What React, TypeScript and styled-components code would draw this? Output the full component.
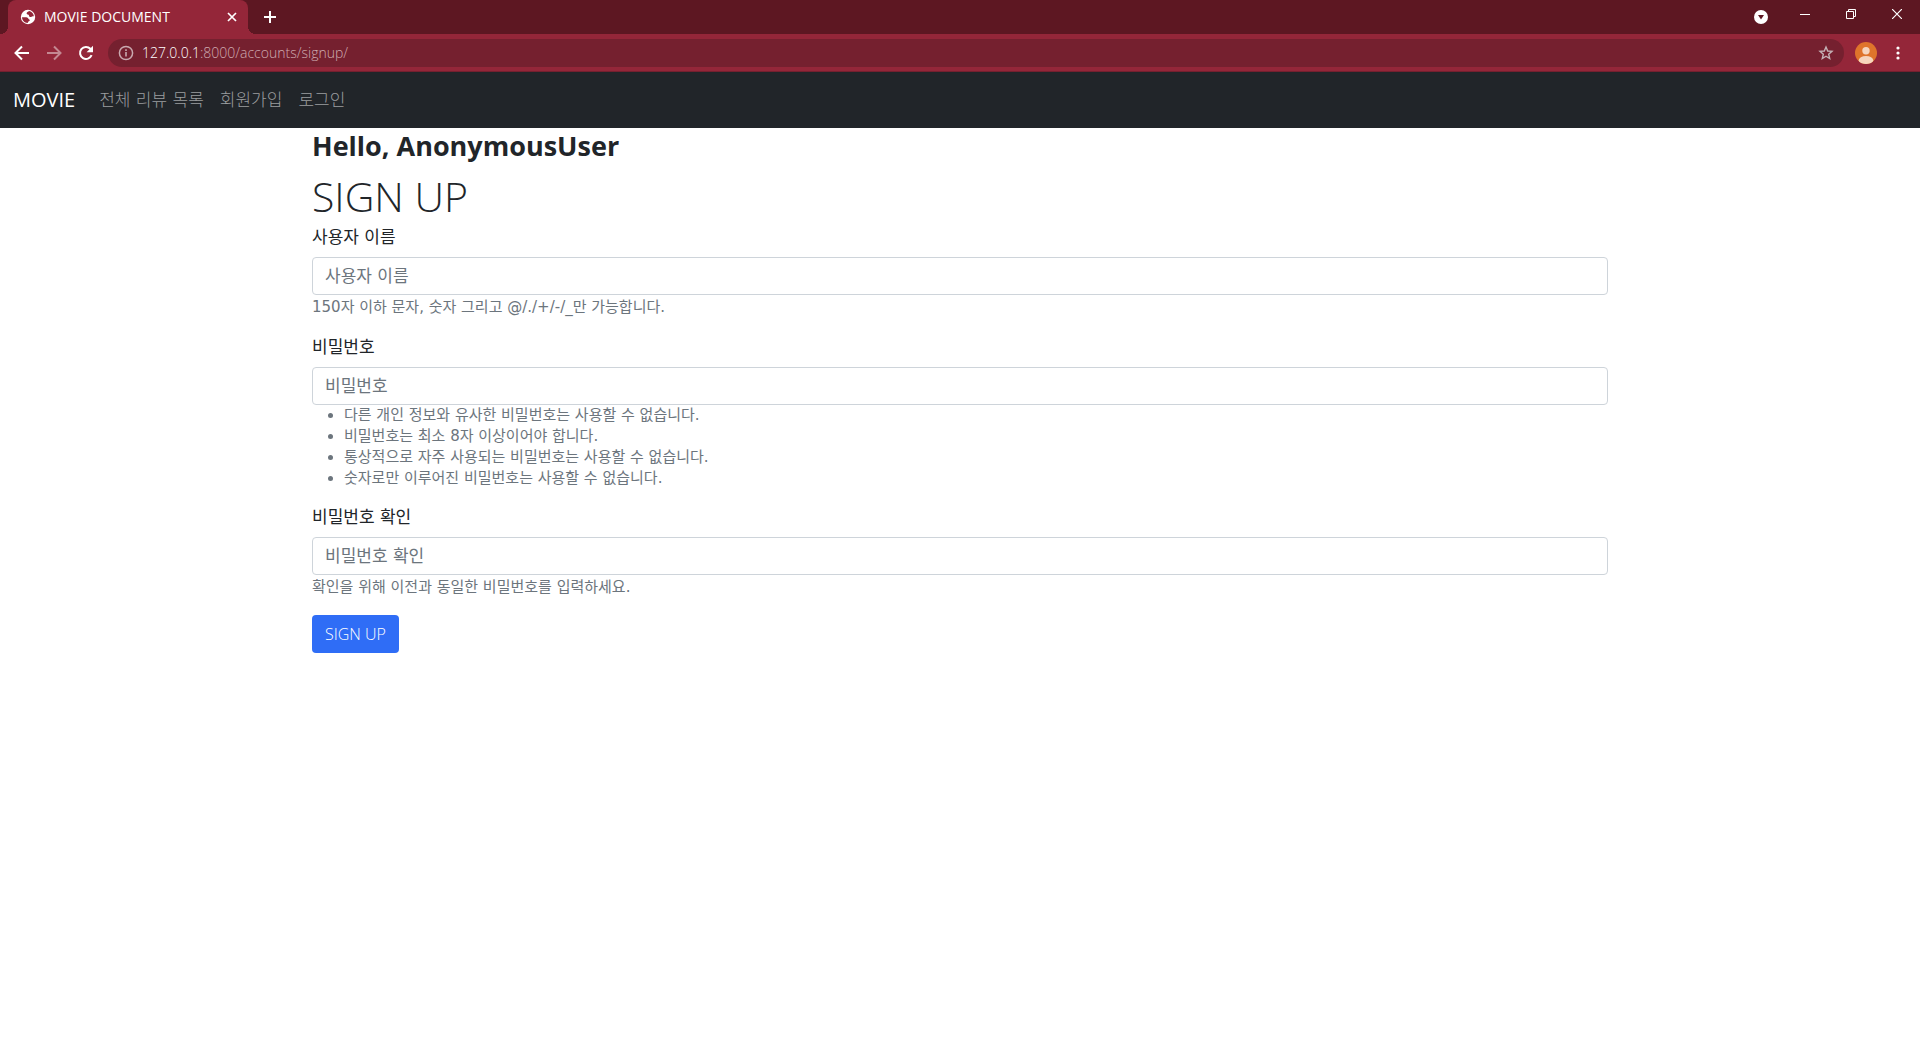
import React from "react";
import styled, { createGlobalStyle } from "styled-components";

const GlobalStyle = createGlobalStyle`
  *, *::before, *::after { box-sizing: border-box; }
  body {
    margin: 0;
    background: #fff;
    color: #212529;
    font-family: "Open Sans", "Noto Sans CJK KR", sans-serif;
    font-size: 17px;
    font-weight: 400;
    line-height: 24px;
  }
  button, input { font: inherit; }
  h1, h2, p, ul { margin: 0; }
`;

const koreanFont = `"DejaVu Sans", "Noto Sans CJK KR", sans-serif`;

const TabStrip = styled.header`
  display: flex;
  align-items: flex-start;
  height: 34px;
  padding-left: 8px;
  background: #5d1722;
`;

const Tab = styled.div`
  position: relative;
  display: flex;
  align-items: center;
  gap: 8px;
  width: 240px;
  height: 34px;
  padding: 0 10px 0 12px;
  border-radius: 8px 8px 0 0;
  background: #942639;
  color: #fff;
  font-size: 14px;
  line-height: 16px;

  &::before, &::after {
    content: "";
    position: absolute;
    bottom: 0;
    width: 8px;
    height: 8px;
  }
  &::before {
    left: -8px;
    background: radial-gradient(circle at 0 0, #5d1722 8px, #942639 8px);
  }
  &::after {
    right: -8px;
    background: radial-gradient(circle at 100% 0, #5d1722 8px, #942639 8px);
  }
`;

const TabTitle = styled.span`
  flex: 1;
`;

const IconButton = styled.button<{ $w?: number; $h?: number; $dim?: boolean }>`
  display: flex;
  align-items: center;
  justify-content: center;
  width: ${(p) => p.$w ?? 32}px;
  height: ${(p) => p.$h ?? 32}px;
  padding: 0;
  border: 0;
  background: none;
  color: #fff;
  opacity: ${(p) => (p.$dim ? 0.45 : 1)};
`;

const NewTab = styled(IconButton)`
  margin-left: 6px;
`;

const WindowControls = styled.div`
  display: flex;
  margin-left: auto;
`;

const Toolbar = styled.div`
  display: flex;
  align-items: center;
  height: 38px;
  padding: 0 6px;
  border-bottom: 1px solid #75202f;
  background: #942639;
`;

const AddressBar = styled.div`
  display: flex;
  flex: 1;
  align-items: center;
  gap: 8px;
  height: 28px;
  margin: 0 6px;
  padding: 0 8px 0 10px;
  border-radius: 14px;
  background: #75202f;
  color: #c9a9af;
`;

const Address = styled.div`
  flex: 1;
  color: #cfabb1;
  font-size: 14px;
  font-weight: 300;
  line-height: 20px;
`;

const Host = styled.span`
  color: #fff;
`;

const Navbar = styled.nav`
  display: flex;
  align-items: center;
  gap: 16px;
  padding: 12px 12px 12px 13px;
  background: #212529;
`;

const Brand = styled.a`
  color: #fff;
  font-size: 20px;
  line-height: 32px;
  text-decoration: none;
`;

const NavLinks = styled.div`
  display: flex;
`;

const NavLink = styled.a`
  padding: 0 8px;
  color: #9b9d9f;
  font-family: ${koreanFont};
  font-weight: 300;
  line-height: 32px;
  text-decoration: none;
`;

const Container = styled.main`
  max-width: 1320px;
  margin: 0 auto;
  padding: 0 12px;
`;

const Greeting = styled.h2`
  margin-bottom: 8px;
  font-size: 27px;
  font-weight: 700;
  line-height: 35px;
`;

const Title = styled.h1`
  margin-bottom: 4px;
  font-size: 41px;
  font-weight: 300;
  line-height: 50px;
`;

const Field = styled.div`
  margin-bottom: 16px;
  font-family: ${koreanFont};
`;

const Label = styled.label`
  display: block;
  margin-bottom: 8px;
`;

const Input = styled.input`
  display: block;
  width: 100%;
  height: 38px;
  padding: 6px 12px;
  border: 1px solid #ced4da;
  border-radius: 4px;
  background: #fff;
  color: #212529;

  &::placeholder {
    color: #6c757d;
    opacity: 1;
  }
`;

const HelpText = styled.p`
  color: #6c757d;
  font-size: 15px;
  line-height: 24px;
`;

const HelpList = styled.ul`
  padding-left: 32px;
  color: #6c757d;
  font-size: 15px;
  line-height: 21px;
`;

const Submit = styled.button`
  height: 38px;
  padding: 0 13px;
  border: 0;
  border-radius: 4px;
  background: #2f6df6;
  color: #fff;
  font-size: 16px;
  font-weight: 300;
`;

const passwordRules = [
  "다른 개인 정보와 유사한 비밀번호는 사용할 수 없습니다.",
  "비밀번호는 최소 8자 이상이어야 합니다.",
  "통상적으로 자주 사용되는 비밀번호는 사용할 수 없습니다.",
  "숫자로만 이루어진 비밀번호는 사용할 수 없습니다.",
];

const GlobeIcon = () => (
  <svg width="16" height="16" viewBox="0 0 16 16" aria-hidden="true">
    <circle cx="8" cy="8" r="7.2" fill="#fff" />
    <path
      d="M9.200 2.100C8.300 3 6.400 3.200 6.600 4.600c.2 1.200 2.200.7 2.400 1.800.2 1 .6 1.700 2 1.600 1.100 0 1.300-.9 2.900-.7C13.700 5 12 2.600 9.200 2.100z"
      fill="#942639"
    />
    <path
      d="M2 8.300c2 0 3.800-.4 5.200.3 1.300.6.900 1.700 2 1.900 1 .3.600 1.500-.4 1.700-.8.200-.4 1.300-1.300 1.700C4.500 13.900 2.200 11.600 2 8.300z"
      fill="#942639"
    />
  </svg>
);

const TabCloseIcon = () => (
  <svg width="10" height="10" viewBox="0 0 10 10" stroke="#fff" strokeWidth="1.7" aria-hidden="true">
    <path d="M1 1l8 8M9 1L1 9" />
  </svg>
);

const PlusIcon = () => (
  <svg width="12" height="12" viewBox="0 0 12 12" stroke="#fff" strokeWidth="2" aria-hidden="true">
    <path d="M6 0v12M0 6h12" />
  </svg>
);

const ArrowIcon = ({ forward = false }: { forward?: boolean }) => (
  <svg width="16" height="16" viewBox="0 0 16 16" fill="none" stroke="#fff" strokeWidth="2" aria-hidden="true">
    <path d={forward ? "M1 8h13M8 1.5L14.5 8 8 14.5" : "M15 8H2M8 1.5L1.5 8 8 14.5"} />
  </svg>
);

const ReloadIcon = () => (
  <svg width="16" height="16" viewBox="0 0 16 16" aria-hidden="true">
    <path d="M13.6 10.2A6 6 0 1 1 12.4 3.8L14 5.4" fill="none" stroke="#fff" strokeWidth="2" />
    <path d="M15 .8v6.4H8.6z" fill="#fff" />
  </svg>
);

const InfoIcon = () => (
  <svg width="16" height="16" viewBox="0 0 16 16" aria-hidden="true">
    <circle cx="8" cy="8" r="6.6" fill="none" stroke="currentColor" strokeWidth="1.5" />
    <path d="M8 7v4.6M8 4.3v1.6" stroke="currentColor" strokeWidth="1.6" />
  </svg>
);

const StarIcon = () => (
  <svg width="16" height="16" viewBox="0 0 16 16" aria-hidden="true">
    <path
      d="M8 2l1.7 4 4.3.4-3.3 2.8 1 4.3L8 11.2l-3.7 2.3 1-4.3L2 6.4l4.3-.4z"
      fill="none"
      stroke="#c4b2b6"
      strokeWidth="1.4"
    />
  </svg>
);

const AvatarIcon = () => (
  <svg width="22" height="22" viewBox="0 0 22 22" aria-hidden="true">
    <clipPath id="avatar">
      <circle cx="11" cy="11" r="11" />
    </clipPath>
    <g clipPath="url(#avatar)">
      <rect width="22" height="22" fill="#df742b" />
      <circle cx="11" cy="8.7" r="3.7" fill="#f6d5bd" />
      <ellipse cx="11" cy="18.5" rx="7.3" ry="4.5" fill="#f6d5bd" />
    </g>
  </svg>
);

const MenuIcon = () => (
  <svg width="4" height="14" viewBox="0 0 4 14" fill="#fff" aria-hidden="true">
    <circle cx="2" cy="2" r="1.6" />
    <circle cx="2" cy="7" r="1.6" />
    <circle cx="2" cy="12" r="1.6" />
  </svg>
);

const TabSearchIcon = () => (
  <svg width="14" height="14" viewBox="0 0 14 14" aria-hidden="true">
    <circle cx="7" cy="7" r="7" fill="#fff" />
    <path d="M4 5h6L7 9.5z" fill="#5d1722" />
  </svg>
);

const MinimizeIcon = () => (
  <svg width="10" height="10" viewBox="0 0 10 10" aria-hidden="true">
    <path d="M0 5.5h10" stroke="#fff" />
  </svg>
);

const RestoreIcon = () => (
  <svg width="10" height="10" viewBox="0 0 10 10" fill="none" stroke="#fff" aria-hidden="true">
    <path d="M.5 2.5h7v7h-7zM2.5 2.5v-2h7v7h-2" />
  </svg>
);

const WindowCloseIcon = () => (
  <svg width="10" height="10" viewBox="0 0 10 10" stroke="#fff" strokeWidth="1.2" aria-hidden="true">
    <path d="M0 0l10 10M10 0L0 10" />
  </svg>
);

export default function App() {
  return (
    <>
      <GlobalStyle />
      <TabStrip>
        <Tab>
          <GlobeIcon />
          <TabTitle>MOVIE DOCUMENT</TabTitle>
          <IconButton $w={12} $h={16} aria-label="Close tab">
            <TabCloseIcon />
          </IconButton>
        </Tab>
        <NewTab $h={34} aria-label="New tab">
          <PlusIcon />
        </NewTab>
        <WindowControls>
          <IconButton $w={42} $h={34} aria-label="Search tabs">
            <TabSearchIcon />
          </IconButton>
          <IconButton $w={46} $h={28} aria-label="Minimize">
            <MinimizeIcon />
          </IconButton>
          <IconButton $w={46} $h={28} aria-label="Restore">
            <RestoreIcon />
          </IconButton>
          <IconButton $w={46} $h={28} aria-label="Close window">
            <WindowCloseIcon />
          </IconButton>
        </WindowControls>
      </TabStrip>
      <Toolbar>
        <IconButton aria-label="Back">
          <ArrowIcon />
        </IconButton>
        <IconButton $dim aria-label="Forward">
          <ArrowIcon forward />
        </IconButton>
        <IconButton aria-label="Reload">
          <ReloadIcon />
        </IconButton>
        <AddressBar>
          <InfoIcon />
          <Address>
            <Host>127.0.0.1</Host>:8000/accounts/signup/
          </Address>
          <IconButton $w={20} $h={20} aria-label="Bookmark">
            <StarIcon />
          </IconButton>
        </AddressBar>
        <IconButton aria-label="Profile">
          <AvatarIcon />
        </IconButton>
        <IconButton aria-label="Menu">
          <MenuIcon />
        </IconButton>
      </Toolbar>
      <Navbar>
        <Brand href="#">MOVIE</Brand>
        <NavLinks>
          <NavLink href="#">전체 리뷰 목록</NavLink>
          <NavLink href="#">회원가입</NavLink>
          <NavLink href="#">로그인</NavLink>
        </NavLinks>
      </Navbar>
      <Container>
        <Greeting>Hello, AnonymousUser</Greeting>
        <Title>SIGN UP</Title>
        <form>
          <Field>
            <Label htmlFor="username">사용자 이름</Label>
            <Input id="username" type="text" placeholder="사용자 이름" />
            <HelpText>150자 이하 문자, 숫자 그리고 @/./+/-/_만 가능합니다.</HelpText>
          </Field>
          <Field>
            <Label htmlFor="password1">비밀번호</Label>
            <Input id="password1" type="password" placeholder="비밀번호" />
            <HelpList>
              {passwordRules.map((rule) => (
                <li key={rule}>{rule}</li>
              ))}
            </HelpList>
          </Field>
          <Field>
            <Label htmlFor="password2">비밀번호 확인</Label>
            <Input id="password2" type="password" placeholder="비밀번호 확인" />
            <HelpText>확인을 위해 이전과 동일한 비밀번호를 입력하세요.</HelpText>
          </Field>
          <Submit type="button">SIGN UP</Submit>
        </form>
      </Container>
    </>
  );
}
